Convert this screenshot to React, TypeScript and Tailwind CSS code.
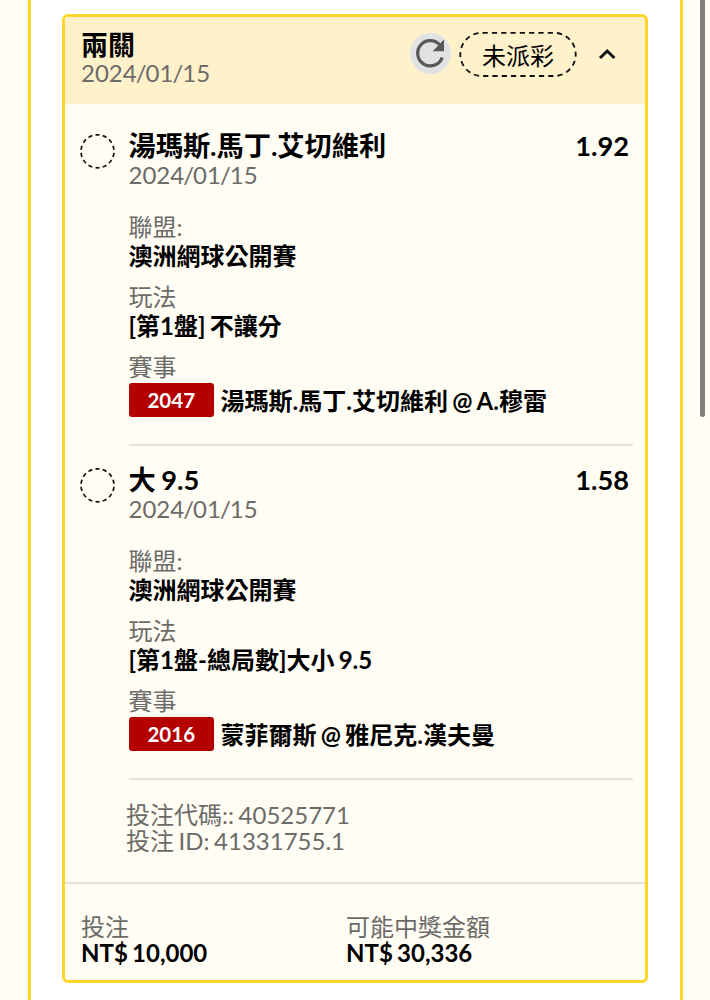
type Leg = {
  title: string;
  odds: string;
  date: string;
  league: string;
  market: string;
  code: string;
  match: string;
};

const legs: Leg[] = [
  {
    title: '湯瑪斯.馬丁.艾切維利',
    odds: '1.92',
    date: '2024/01/15',
    league: '澳洲網球公開賽',
    market: '[第1盤] 不讓分',
    code: '2047',
    match: '湯瑪斯.馬丁.艾切維利 @ A.穆雷',
  },
  {
    title: '大 9.5',
    odds: '1.58',
    date: '2024/01/15',
    league: '澳洲網球公開賽',
    market: '[第1盤-總局數]大小 9.5',
    code: '2016',
    match: '蒙菲爾斯 @ 雅尼克.漢夫曼',
  },
];

function RefreshIcon() {
  return (
    <svg width="41" height="41" viewBox="0 0 41 41" className="shrink-0">
      <circle cx="20.5" cy="20.5" r="20.5" fill="#e1e2e4" />
      <path d="M32.2 24.4A12.6 12.6 0 1 1 29.8 12" fill="none" stroke="#595959" strokeWidth="3.2" />
      <path d="M34 6.5V18.2H22.6Z" fill="#595959" />
    </svg>
  );
}

function PendingRing() {
  return (
    <svg width="36" height="36" viewBox="0 0 36 36" className="mt-[21px] shrink-0">
      <circle
        cx="17.5"
        cy="18.3"
        r="16.5"
        fill="none"
        stroke="#111"
        strokeWidth="1.7"
        pathLength="140"
        strokeDasharray="5.6 4.4"
        strokeDashoffset="7.8"
      />
    </svg>
  );
}

function StatusPill() {
  return (
    <div className="relative ml-[8px] flex h-[46px] w-[118px] items-center justify-center">
      <svg width="118" height="46" viewBox="0 0 118 46" className="absolute inset-0">
        <rect
          x="1.3"
          y="1.8"
          width="115.4"
          height="43.2"
          rx="21.6"
          fill="none"
          stroke="#111"
          strokeWidth="1.8"
          pathLength="300"
          strokeDasharray="5.6 4.4"
          strokeDashoffset="-0.7"
        />
      </svg>
      <span className="mt-[4px] leading-[26px] text-black">未派彩</span>
    </div>
  );
}

function DateText({ value }: { value: string }) {
  const [year, month, day] = value.split('/');
  return (
    <div className="leading-[22px]">
      {year}
      <span className="-mx-px">/</span>
      {month}
      <span className="-mx-px">/</span>
      {day}
    </div>
  );
}

function LegRow({ leg }: { leg: Leg }) {
  return (
    <div className="flex h-[334px] pl-[15px]">
      <PendingRing />
      <div className="ml-[12.5px] w-[504.5px] border-b-2 border-[#e6e3de] pt-[16px]">
        <div className="flex justify-between pr-[4px] text-[27.2px] leading-[36px] font-bold text-black [word-spacing:-1px]">
          <span>{leg.title}</span>
          <span>{leg.odds}</span>
        </div>
        <DateText value={leg.date} />
        <div className="mt-[26px] leading-[29px]">聯盟:</div>
        <div className="leading-[29px] font-bold text-black">{leg.league}</div>
        <div className="mt-[12px] leading-[29px]">玩法</div>
        <div className="leading-[29px] font-bold text-black">{leg.market}</div>
        <div className="mt-[12px] leading-[29px]">賽事</div>
        <div className="mt-[1px] flex items-center">
          <span className="flex h-[34px] w-[85.5px] items-center justify-center rounded-[3px] bg-[#b50000] text-[20.5px] leading-[34px] font-bold text-white">
            {leg.code}
          </span>
          <span className="mt-[2px] ml-[6.5px] leading-[34px] font-bold whitespace-nowrap text-black">{leg.match}</span>
        </div>
      </div>
    </div>
  );
}

export default function App() {
  return (
    <div className="flex h-[1000px] w-[710px] overflow-hidden bg-[#fffdf4] pl-[28px] font-['Lato','Noto_Sans_CJK_TC',sans-serif] text-[24px] text-[#6c6b68] [word-spacing:-1.6px]">
      <div className="h-full w-[654.5px] shrink-0 border-x-[3px] border-[#ffd52b] bg-white pt-[14px] pl-[31px]">
        <div className="flex h-[969px] w-[586px] flex-col overflow-hidden rounded-[6px] border-[3px] border-[#ffd52b] bg-[#fffdf4]">
          <div className="flex h-[87px] shrink-0 bg-[#fff1ca] pl-[16px]">
            <div className="w-[329px] pt-[11px]">
              <div className="text-[27px] leading-[34px] font-bold text-black">兩關</div>
              <DateText value="2024/01/15" />
            </div>
            <div className="flex h-[73px] items-center">
              <RefreshIcon />
              <StatusPill />
              <svg width="20" height="14" viewBox="0 0 20 14" className="ml-[20px]">
                <path d="M3 11L10.2 4L17.4 11" fill="none" stroke="#111" strokeWidth="3" />
              </svg>
            </div>
          </div>
          <div className="h-[676px] shrink-0 pt-[8px]">
            {legs.map((leg) => (
              <LegRow key={leg.code} leg={leg} />
            ))}
          </div>
          <div className="h-[104px] shrink-0 border-b-2 border-[#e6e3de] pt-[22px] pl-[61px] leading-[26px]">
            <div>投注代碼:: 40525771</div>
            <div>投注 ID: 41331755.1</div>
          </div>
          <div className="grid grid-cols-[265px_1fr] pt-[30px] pl-[16px] leading-[26px]">
            <div>
              <div>投注</div>
              <div className="font-bold text-black">NT$ 10,000</div>
            </div>
            <div>
              <div>可能中獎金額</div>
              <div className="font-bold text-black">NT$ 30,336</div>
            </div>
          </div>
        </div>
      </div>
      <div className="ml-[17px] h-[417px] w-[5px] shrink-0 rounded-b-full bg-[#7f7e7a]" />
    </div>
  );
}
